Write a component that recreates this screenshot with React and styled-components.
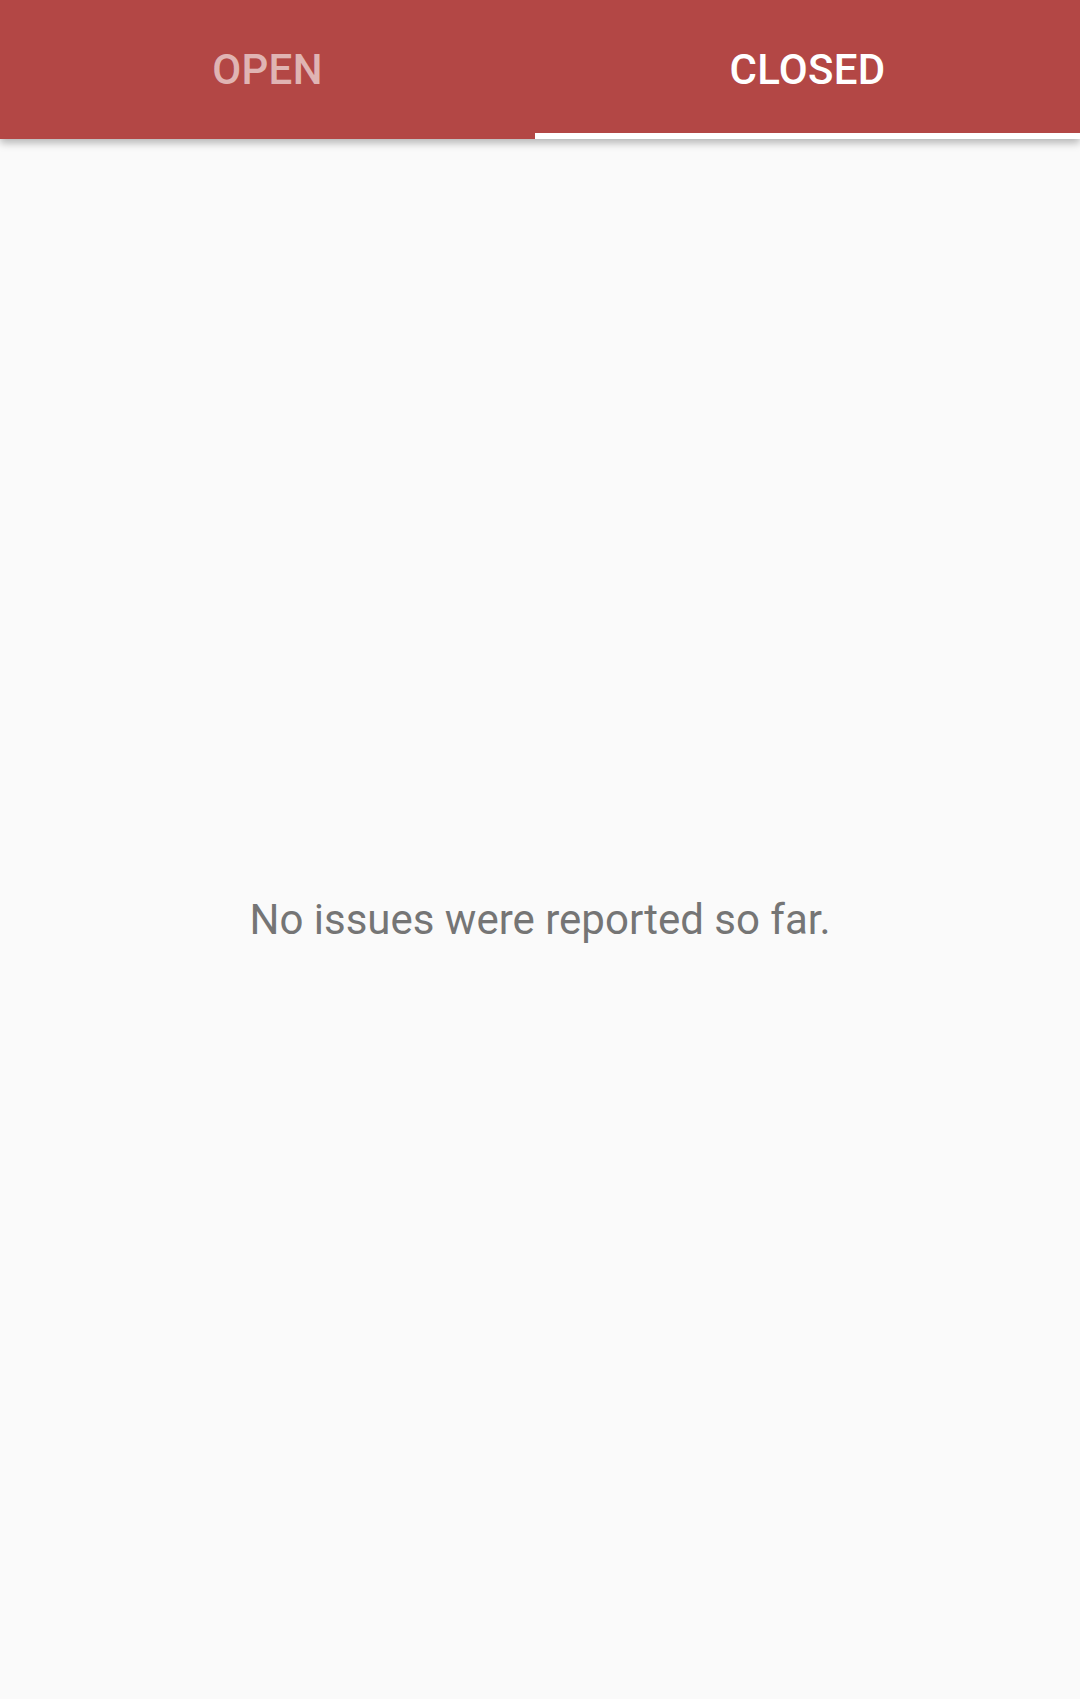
import React from 'react'
import styled, { createGlobalStyle } from 'styled-components'

const GlobalStyle = createGlobalStyle`
    html, body {
        margin: 0;
        padding: 0;
        background: #fafafa;
    }
    body {
        font-family: Roboto, "Noto Sans", sans-serif;
    }
`;

function App() {
    const tabs = [
        { label: 'OPEN', grow: 535, active: false },
        { label: 'CLOSED', grow: 545, active: true },
    ]
    return (
        <Screen>
            <GlobalStyle />
            <TabBar>
                {tabs.map((tab) => (
                    <Tab key={tab.label} grow={tab.grow} active={tab.active}>
                        {tab.label}
                    </Tab>
                ))}
            </TabBar>
            <Content>
                <Empty>No issues were reported so far.</Empty>
            </Content>
        </Screen>
    )
}

const Screen = styled.div`
    display: flex;
    flex-direction: column;
    width: 1080px;
    height: 1699px;
    background: #fafafa;
    overflow: hidden;
`;
const TabBar = styled.div`
    display: flex;
    height: 139px;
    background: #b34745;
    box-shadow: 0 4px 8px rgba(0, 0, 0, 0.28);
    position: relative;
    z-index: 1;
    flex-shrink: 0;
`;
const Tab = styled.div.withConfig({ shouldForwardProp: (p) => p !== 'grow' && p !== 'active' })`
    flex: 0 0 ${(p) => p.grow}px;
    display: flex;
    align-items: center;
    justify-content: center;
    padding-top: 6px;
    box-sizing: border-box;
    font-size: 42px;
    font-weight: 500;
    letter-spacing: 0.3px;
    color: ${(p) => (p.active ? '#ffffff' : 'rgba(255, 255, 255, 0.6)')};
    border-bottom: 6px solid ${(p) => (p.active ? '#ffffff' : 'transparent')};
`;
const Content = styled.div`
    flex: 1;
    display: flex;
    align-items: center;
    justify-content: center;
`;
const Empty = styled.p`
    margin: 0;
    font-size: 42px;
    color: #757575;
`;

export default App
